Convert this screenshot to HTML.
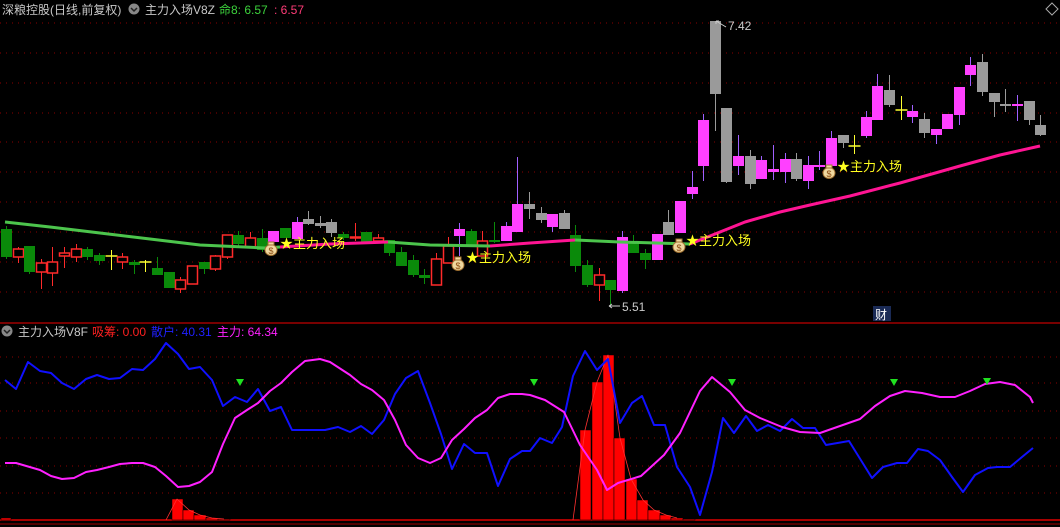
<!DOCTYPE html>
<html><head><meta charset="utf-8"><style>
html,body{margin:0;padding:0;background:#000;width:1060px;height:527px;overflow:hidden}
svg{display:block}
text{font-family:"Liberation Sans","Noto Sans CJK SC",sans-serif}
</style></head><body>
<svg id="s" width="1060" height="527" viewBox="0 0 1060 527" xmlns="http://www.w3.org/2000/svg">
<g id="grid"></g>
<line x1="0" y1="323" x2="1060" y2="323" stroke="#a00000" stroke-width="1.5"/>
<line x1="0" y1="520" x2="1060" y2="520" stroke="#e00000" stroke-width="1.5"/>
<line x1="0" y1="524" x2="1060" y2="524" stroke="#a00000" stroke-width="1"/>
<g id="candles"></g>
<g id="ma"></g>
<g id="lower"></g>
<text x="2" y="14" font-size="12" fill="#c8c8c8">深粮控股(日线,前复权)</text>
<circle cx="134" cy="9" r="5.5" fill="#888"/><path d="M131 8 L134 11 L137 8" stroke="#222" stroke-width="1.5" fill="none"/>
<text x="145" y="14" font-size="12" fill="#c8c8c8">主力入场V8Z</text>
<text x="219" y="14" font-size="12" fill="#3cd23c">命8: 6.57</text>
<text x="274" y="14" font-size="12" fill="#ff3c78">: 6.57</text>
<path d="M1052 3 L1058 9 L1052 15 L1046 9 Z" stroke="#aaa" fill="none"/>
<circle cx="7" cy="331" r="5.5" fill="#888"/><path d="M4 330 L7 333 L10 330" stroke="#222" stroke-width="1.5" fill="none"/>
<text x="18" y="336" font-size="12" fill="#c8c8c8">主力入场V8F</text>
<text x="92" y="336" font-size="12" fill="#ff2020">吸筹: 0.00</text>
<text x="151" y="336" font-size="12" fill="#2020ff">散户: 40.31</text>
<text x="217" y="336" font-size="12" fill="#ff20ff">主力: 64.34</text>
<path d="M716 21 L726 27" stroke="#ccc"/><path d="M716 21 l3 0 M716 21 l0 3" stroke="#ccc"/>
<text x="728" y="30" font-size="12" fill="#ccc">7.42</text>
<path d="M609 306 L620 306 M609 306 l3 -2 M609 306 l3 2" stroke="#ccc"/>
<text x="622" y="311" font-size="12" fill="#ccc">5.51</text>
<rect x="873" y="306" width="18" height="15" fill="#1a2a55"/>
<text x="875" y="319" font-size="12" fill="#fff">财</text>
</svg>
<script>
var NS="http://www.w3.org/2000/svg";
function el(p,t,a){var e=document.createElementNS(NS,t);for(var k in a)e.setAttribute(k,a[k]);p.appendChild(e);return e;}
var g=document.getElementById('grid');
[23,53,83,113,142,172,202,232,262,292].forEach(function(y){el(g,'line',{x1:0,y1:y,x2:1060,y2:y,stroke:'#8a0000','stroke-dasharray':'1 5'});});
[357,383,411,438,466,493].forEach(function(y){el(g,'line',{x1:0,y1:y,x2:1060,y2:y,stroke:'#8a0000','stroke-dasharray':'1 5'});});
var D="g 229 257 226 259|r 249 257 247 263|g 246 272 246 274|r 263 272 259 289|r 262 273 247 286|r 253 256 247 268|r 249 257 244 262|g 249 257 247 260|g 255 261 253 265|y 256 256 250 270|r 257 262 253 269|g 262 265 260 274|y 262 262 260 272|g 268 275 257 275|g 272 288 272 288|r 280 289 277 293|r 266 284 266 284|g 262 269 262 274|r 256 269 255 271|r 235 257 235 259|g 235 244 231 247|r 238 247 232 247|g 238 250 229 252|m 231 242 231 242|g 228 238 228 238|m 222 239 217 239|s 219 224 211 225|s 223 226 216 228|s 222 233 219 237|g 234 238 232 240|r 237 238 223 241|g 232 242 232 242|r 238 241 234 241|g 240 253 240 256|g 252 266 247 266|g 260 275 255 277|g 275 278 269 284|r 259 285 253 285|r 246 263 237 263|m 229 236 223 256|g 231 246 229 246|r 241 256 231 256|g 240 241 222 243|m 226 241 222 241|m 204 232 157 232|s 204 209 192 219|s 213 220 207 223|m 214 227 214 232|s 213 229 210 229|g 235 266 225 272|g 265 285 260 287|r 275 285 268 301|g 280 290 280 306|m 237 291 231 293|g 241 253 235 253|g 253 260 249 269|m 234 260 234 260|s 222 235 210 235|m 201 233 201 233|m 187 194 171 199|m 120 166 114 181|s 21 94 21 131|s 108 182 108 183|m 156 166 135 175|s 156 184 150 189|m 160 179 156 179|m 169 172 145 180|m 159 172 153 183|s 159 179 153 181|m 165 181 156 189|m 165 166 151 170|m 138 166 131 166|s 135 143 135 148|y 146 146 135 154|m 117 136 111 138|m 86 120 74 120|s 90 105 75 107|y 110 110 96 120|m 111 117 105 123|s 119 133 113 138|m 129 135 129 144|m 114 129 114 129|m 87 115 87 125|m 65 75 57 86|s 62 92 54 96|s 93 102 93 117|s 104 104 89 112|m 104 104 95 121|s 101 120 101 125|s 125 135 115 136".split('|');
var cg=document.getElementById('candles');
var col={g:['#0a8a0a','#0a8a0a'],r:['#ff2a2a','#ff2a2a'],m:['#ff40ff','#a060ff'],s:['#9a9a9a','#9a9a9a'],y:['#ffff30','#ffff30']};
D.forEach(function(s,i){var a=s.split(' '),t=a[0],T=+a[1],B=+a[2],wt=+a[3],wb=+a[4];var cx=Math.round(6+11.62*i)+0.5;var c=col[t];
 el(cg,'line',{x1:cx,y1:wt,x2:cx,y2:wb,stroke:c[1]});
 if(t=='y'){el(cg,'line',{x1:cx-6,y1:T,x2:cx+6,y2:T,stroke:c[0],'stroke-width':1.5});return;}
 var h=Math.max(B-T,2);
 if(t=='r'){el(cg,'rect',{x:cx-5,y:T,width:10,height:Math.max(B-T,1),fill:'#000',stroke:c[0],'stroke-width':1.5});}
 else el(cg,'rect',{x:cx-5.5,y:T,width:11,height:h,fill:c[0]});
});
var mg=document.getElementById('ma');
function pl(p,pts,c,w){el(p,'polyline',{points:pts,fill:'none',stroke:c,'stroke-width':w,'stroke-linejoin':'round'});}
pl(mg,"5,222 50,227 100,233 150,239 200,245 265,248 280,247","#4cc44c",3);
pl(mg,"280,247 330,244 388,242","#ff1493",3);
pl(mg,"388,242 430,245 490,246","#4cc44c",3);
pl(mg,"490,246 530,243 575,240","#ff1493",3);
pl(mg,"575,240 620,242 690,244","#4cc44c",3);
pl(mg,"690,244 720,232 745,222 780,212 810,205 850,196 900,183 960,166 1000,155 1040,146","#ff1493",3);
function bag(x,y,lx,ly){el(mg,'ellipse',{cx:x,cy:y+2,rx:6,ry:5.5,fill:'#f0d8a0',stroke:'#a07030'});el(mg,'rect',{x:x-3,y:y-6,width:6,height:3,fill:'#f0d8a0',stroke:'#a07030'});
 var t=el(mg,'text',{x:x,y:y+6,'font-size':9,fill:'#8a4a10','text-anchor':'middle'});t.textContent='$';
 var s=el(mg,'text',{x:lx,y:ly,'font-size':13,fill:'#ffff20'});s.textContent='★主力入场';}
bag(271,248,280,248);bag(458,263,466,262);bag(679,245,686,245);bag(829,171,837,171);
var lw=document.getElementById('lower');
[[1,11,518],[172,183,499],[183,194,510],[194,206,515],[206,218,518],[218,230,519],[580,591,430],[592,603,382],[603,614,355],[614,625,438],[626,637,479],[637,648,500],[648,660,510],[660,671,515],[671,683,518],[683,695,519]].forEach(function(b){el(lw,'rect',{x:b[0],y:b[2],width:b[1]-b[0],height:520-b[2],fill:'#ff0000',stroke:'#000','stroke-width':0.5});});
pl(lw,"166,520 177,499 189,510 200,515 212,518 224,519","#ff3030",0.8);
pl(lw,"573,520 585,430 597,382 608,355 620,438 631,479 643,500 654,510 666,515 677,518","#ff3030",0.8);
pl(lw,"5,380 16,389 28,362 40,371 51,373 62,383 74,389 86,379 97,375 109,379 120,378 132,369 143,370 155,359 166,343 178,354 189,369 200,367 212,380 223,406 235,397 247,402 258,389 270,411 281,407 292,430 325,430 338,427 350,432 361,426 372,434 384,420 395,394 406,378 418,371 430,403 441,434 452,469 464,444 475,453 487,453 498,486 510,459 522,451 530,451 540,438 552,443 562,427 573,376 585,351 597,370 608,359 620,423 632,403 642,396 654,425 665,425 677,467 690,487 700,515 712,472 723,418 734,433 746,416 757,431 768,425 780,431 792,419 803,428 815,428 826,445 849,441 872,478 883,467 897,463 907,463 918,449 928,451 940,460 952,477 963,492 975,475 988,468 997,467 1010,467 1022,457 1033,448","#1010ff",2);
pl(lw,"5,463 16,463 40,470 51,476 62,479 74,478 86,472 97,470 109,467 120,464 132,463 143,463 155,467 166,476 178,487 189,486 200,482 212,472 223,444 235,418 247,410 258,403 270,391 281,383 292,372 305,361 320,359 330,362 350,375 361,384 372,390 384,400 395,420 406,445 418,458 430,463 441,458 452,440 464,429 475,418 487,410 498,398 510,394 522,394 530,395 545,400 564,412 580,445 597,470 607,490 618,483 641,476 664,455 680,433 700,391 712,377 730,392 745,410 760,418 782,427 800,432 820,433 840,426 860,419 875,406 890,396 905,391 922,393 940,397 955,397 970,391 985,384 1000,382 1015,385 1030,397 1033,403","#ff20ff",2);
[[240,382],[534,382],[732,382],[894,382],[987,381]].forEach(function(p){el(lw,'path',{d:'M'+(p[0]-4)+' '+(p[1]-3)+' L'+(p[0]+4)+' '+(p[1]-3)+' L'+p[0]+' '+(p[1]+4)+' Z',fill:'#20e020'});});
</script>
</body></html>
